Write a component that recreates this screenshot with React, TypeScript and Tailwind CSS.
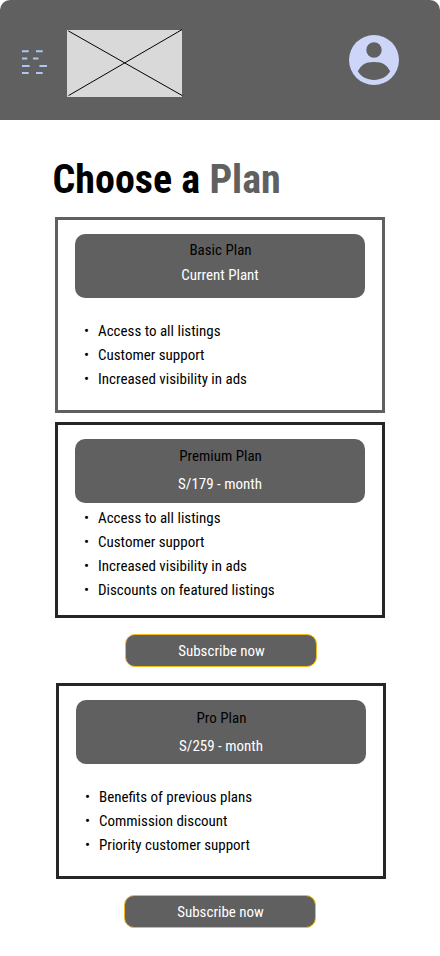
type Plan = {
  name: string;
  price: string;
  features: string[];
  card: string;
  banner: string;
  list: string;
};

const plans: Record<"basic" | "premium" | "pro", Plan> = {
  basic: {
    name: "Basic Plan",
    price: "Current Plant",
    features: ["Access to all listings", "Customer support", "Increased visibility in ads"],
    card: "border-[#606060]",
    banner: "pt-1 gap-px",
    list: "mt-[21px]",
  },
  premium: {
    name: "Premium Plan",
    price: "S/179 - month",
    features: [
      "Access to all listings",
      "Customer support",
      "Increased visibility in ads",
      "Discounts on featured listings",
    ],
    card: "mt-[9px] border-[#262626]",
    banner: "pt-[5px] gap-1",
    list: "mt-[3px]",
  },
  pro: {
    name: "Pro Plan",
    price: "S/259 - month",
    features: ["Benefits of previous plans", "Commission discount", "Priority customer support"],
    card: "mt-4 ml-px border-[#262626]",
    banner: "pt-1.5 gap-1",
    list: "mt-[21px]",
  },
};

function MenuIcon() {
  return (
    <svg className="mt-1 h-7 w-[27px]" viewBox="21 48 27 28" fill="none" stroke="#afc6f3" strokeWidth="2">
      <path d="M22 51.3h6.7M36 51.3h6.7M22 58.6h5.3M33 58.6h5.5M22 66h7.6M39.4 66H47M22 73.1h6.7M36 73.1h6.7" />
    </svg>
  );
}

function ImagePlaceholder() {
  return (
    <svg className="h-[67px] w-[115px] overflow-visible bg-[#d9d9d9]" viewBox="0 0 115 67" stroke="#000" strokeWidth="1">
      <path d="M1.3 .9 115.3 65.6M1.5 65.6 115 -.4" />
    </svg>
  );
}

function AvatarIcon() {
  return (
    <svg className="size-[50px]" viewBox="0 0 50 50">
      <circle cx="25" cy="25" r="25" fill="#cdd5f9" />
      <circle cx="25" cy="15" r="7.7" fill="#606060" />
      <path d="M8.8 36.3C11.8 30.800 16 27.200 21 27.200Q25 26.800 29 27.200C34 27.200 38.200 30.800 41.200 36.300C37.800 41.700 32 45 25 45S12.200 41.700 8.800 36.300Z" fill="#606060" />
    </svg>
  );
}

function PlanCard({ plan }: { plan: Plan }) {
  return (
    <section className={`h-[196px] w-[330px] shrink-0 border-3 px-[17px] pt-3.5 ${plan.card}`}>
      <div className={`flex h-16 flex-col items-center rounded-[10px] bg-[#606060] ${plan.banner}`}>
        <h2 className="pl-px text-black">{plan.name}</h2>
        <p className="text-white">{plan.price}</p>
      </div>
      <ul className={`pl-[9px] ${plan.list}`}>
        {plan.features.map((feature) => (
          <li key={feature} className="flex">
            <span className="w-3.5">•</span>
            {feature}
          </li>
        ))}
      </ul>
    </section>
  );
}

function SubscribeButton({ className }: { className: string }) {
  return (
    <button
      className={`h-[33px] w-48 shrink-0 rounded-[10px] border border-[#f2bc1b] bg-[#606060] pl-px text-white ${className}`}
    >
      Subscribe now
    </button>
  );
}

export default function App() {
  return (
    <div className="flex h-[956px] w-[440px] flex-col bg-white font-['Roboto_Condensed',Roboto,sans-serif] text-[15px] leading-6 text-black">
      <header className="flex h-[120px] shrink-0 items-center rounded-t-[10px] bg-[#606060] pr-[41px] pl-[21px]">
        <MenuIcon />
        <div className="mt-[7px] ml-[19px]">
          <ImagePlaceholder />
        </div>
        <div className="ml-auto">
          <AvatarIcon />
        </div>
      </header>
      <main className="flex flex-col items-start pl-[55px]">
        <h1 className="mt-9 mb-[13px] -ml-[2.5px] text-[40px] leading-12 font-bold">
          Choose a <span className="text-[#606060]">Plan</span>
        </h1>
        <PlanCard plan={plans.basic} />
        <PlanCard plan={plans.premium} />
        <SubscribeButton className="mt-4 ml-[70px]" />
        <PlanCard plan={plans.pro} />
        <SubscribeButton className="mt-4 ml-[69px]" />
      </main>
    </div>
  );
}
